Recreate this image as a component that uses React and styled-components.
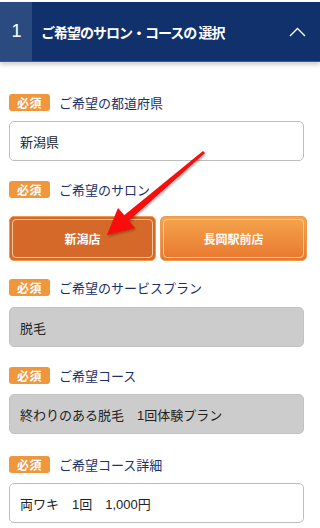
import React from "react";
import styled, { createGlobalStyle } from "styled-components";

const Global = createGlobalStyle`
  html, body { margin: 0; padding: 0; background: #fff; }
  body { font-family: "Liberation Sans", "Noto Sans CJK JP", sans-serif; }
  * { box-sizing: border-box; }
`;

const Page = styled.div`
  position: relative;
  width: 320px;
  height: 528px;
  overflow: hidden;
  background: #fff;
  padding-top: 2px;
`;

const Header = styled.div`
  display: flex;
  align-items: stretch;
  height: 60px;
  background: #10316c;
  border-bottom: 1px solid #3a5a90;
  box-shadow: 0 3px 4px rgba(0, 0, 0, 0.18);
  color: #fff;
`;

const StepNo = styled.div`
  width: 32px;
  display: flex;
  align-items: center;
  justify-content: center;
  background: #2b4b80;
  font-size: 18px;
  padding-left: 1px;
`;

const Title = styled.div`
  flex: 1;
  display: flex;
  align-items: center;
  padding-left: 9px;
  font-family: "Noto Sans CJK JP", sans-serif;
  font-size: 14px;
  font-weight: 700;
  letter-spacing: -1px;
  white-space: pre;
`;

const Chevron = styled.div`
  width: 40px;
  display: flex;
  align-items: center;
  justify-content: center;
  padding-right: 6px;
`;

const Body = styled.div`
  display: flex;
  flex-direction: column;
  padding: 0 16px 0 9px;
`;

const Field = styled.div`
  display: flex;
  flex-direction: column;
  margin-top: ${(p) => p.$top}px;
  gap: ${(p) => p.$gap}px;
`;

const LabelRow = styled.div`
  display: flex;
  align-items: center;
  gap: 9px;
  height: 17px;
`;

const Badge = styled.span`
  width: 41px;
  height: 17px;
  border-radius: 3px;
  background: #f0963c;
  color: #fff;
  font-size: 12px;
  font-weight: bold;
  display: flex;
  align-items: center;
  justify-content: center;
  letter-spacing: 0.5px;
`;

const LabelText = styled.span`
  font-size: 13px;
  color: #1b2f6a;
`;

const Input = styled.div`
  height: 40px;
  border: 1px solid ${(p) => (p.$disabled ? "#c2c2c2" : "#bdbdbd")};
  border-radius: 5px;
  background: ${(p) => (p.$disabled ? "#cccccc" : "#fff")};
  display: flex;
  align-items: center;
  padding-left: 10px;
  font-size: 13px;
  color: #222;
  white-space: pre;
`;

const ButtonRow = styled.div`
  display: grid;
  grid-template-columns: 1fr 1fr;
  gap: 4px;
  margin-right: -3px;
`;

const SalonButton = styled.div`
  position: relative;
  height: 45px;
  border-radius: 5px;
  border: 1px solid #eb9a50;
  background: ${(p) =>
    p.$active ? "#d4692a" : "linear-gradient(#f5a54d, #e8772e)"};
  color: #fff;
  font-size: 12px;
  font-weight: bold;
  display: flex;
  align-items: center;
  justify-content: center;
  &::before {
    content: "";
    position: absolute;
    inset: 2px;
    border: 1px solid rgba(255, 214, 170, 0.85);
    border-radius: 4px;
  }
`;

const ArrowLayer = styled.svg`
  position: absolute;
  left: 0;
  top: 0;
  pointer-events: none;
`;

const fields = [
  { label: "ご希望の都道府県", value: "新潟県", top: 32, gap: 10 },
  { label: "ご希望のサロン", salon: true, top: 20, gap: 18 },
  { label: "ご希望のサービスプラン", value: "脱毛", disabled: true, top: 18, gap: 11 },
  { label: "ご希望コース", value: "終わりのある脱毛　1回体験プラン", disabled: true, top: 20, gap: 10 },
  { label: "ご希望コース詳細", value: "両ワキ　1回　1,000円", top: 22, gap: 10 },
];

export default function App() {
  return (
    <Page>
      <Global />
      <Header>
        <StepNo>1</StepNo>
        <Title>ご希望のサロン・コースの 選択</Title>
        <Chevron>
          <svg width="17" height="10" viewBox="0 0 17 10">
            <polyline
              points="1,9 8.5,1.5 16,9"
              fill="none"
              stroke="#fff"
              strokeWidth="1.4"
            />
          </svg>
        </Chevron>
      </Header>
      <Body>
        {fields.map((f) => (
          <Field key={f.label} $top={f.top} $gap={f.gap}>
            <LabelRow>
              <Badge>必須</Badge>
              <LabelText>{f.label}</LabelText>
            </LabelRow>
            {f.salon ? (
              <ButtonRow>
                <SalonButton $active>新潟店</SalonButton>
                <SalonButton>長岡駅前店</SalonButton>
              </ButtonRow>
            ) : (
              <Input $disabled={f.disabled}>{f.value}</Input>
            )}
          </Field>
        ))}
      </Body>
      <ArrowLayer width="320" height="528" viewBox="0 0 320 528">
        <defs>
          <filter id="sh" x="-20%" y="-20%" width="140%" height="140%">
            <feDropShadow dx="1" dy="1.5" stdDeviation="1.2" floodColor="#000" floodOpacity="0.3" />
          </filter>
        </defs>
        <polygon
          points="203,150.9 124.2,215.3 118,208 107,235 135,228 128.8,220.7 205,153.1"
          fill="#f80a0a"
          filter="url(#sh)"
        />
      </ArrowLayer>
    </Page>
  );
}
